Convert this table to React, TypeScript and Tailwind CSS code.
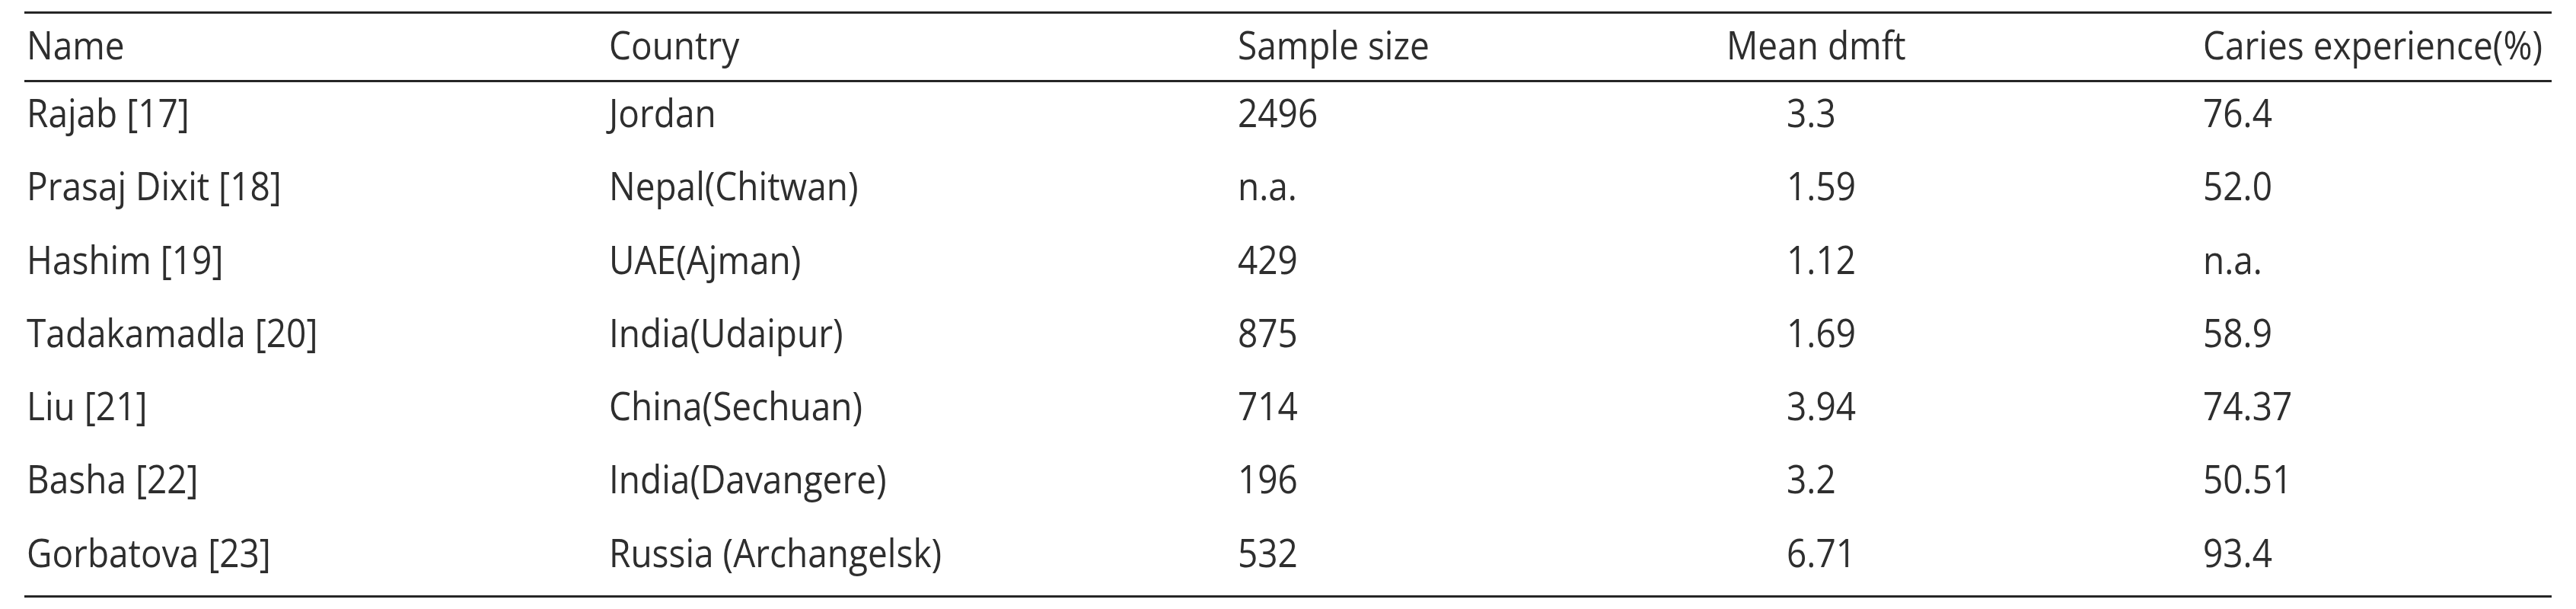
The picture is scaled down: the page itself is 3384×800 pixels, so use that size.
import React from 'react';

interface StudyRow {
    name: string;
    country: string;
    sample: string;
    dmft: string;
    caries: string;
}

const rows: StudyRow[] = [
    { name: 'Rajab [17]', country: 'Jordan', sample: '2496', dmft: '3.3', caries: '76.4' },
    { name: 'Prasaj Dixit [18]', country: 'Nepal(Chitwan)', sample: 'n.a.', dmft: '1.59', caries: '52.0' },
    { name: 'Hashim [19]', country: 'UAE(Ajman)', sample: '429', dmft: '1.12', caries: 'n.a.' },
    { name: 'Tadakamadla [20]', country: 'India(Udaipur)', sample: '875', dmft: '1.69', caries: '58.9' },
    { name: 'Liu [21]', country: 'China(Sechuan)', sample: '714', dmft: '3.94', caries: '74.37' },
    { name: 'Basha [22]', country: 'India(Davangere)', sample: '196', dmft: '3.2', caries: '50.51' },
    { name: 'Gorbatova [23]', country: 'Russia (Archangelsk)', sample: '532', dmft: '6.71', caries: '93.4' },
];

const grid = 'grid grid-cols-[765px_826px_642px_626px_1fr]';

function Cell({ children, className = '' }: { children: React.ReactNode; className?: string }) {
    return (
        <div className={`pl-[3px] whitespace-nowrap ${className}`}>
            <span className="inline-block origin-bottom scale-y-[1.12]">{children}</span>
        </div>
    );
}

export default function App() {
    return (
        <div className="w-[3384px] h-[800px] bg-white overflow-hidden pt-[15px]">
            <div
                className="ml-[32px] w-[3320px] text-[46px] leading-none text-[#2e2e2e]"
                style={{ fontFamily: '"Open Sans", "Noto Sans", sans-serif' }}
            >
                <div className={`${grid} border-t-[3px] border-b-[3px] border-[#262626] h-[93px] pt-[20px]`}>
                    <Cell>Name</Cell>
                    <Cell>Country</Cell>
                    <Cell>Sample size</Cell>
                    <Cell>Mean dmft</Cell>
                    <Cell>Caries experience(%)</Cell>
                </div>

                <div className="border-b-[3px] border-[#262626]">
                    {rows.map((r) => (
                        <div key={r.name} className={`${grid} h-[96.3px] pt-[19px]`}>
                            <Cell>{r.name}</Cell>
                            <Cell>{r.country}</Cell>
                            <Cell>{r.sample}</Cell>
                            <Cell className="pl-[82px]">{r.dmft}</Cell>
                            <Cell>{r.caries}</Cell>
                        </div>
                    ))}
                </div>
            </div>
        </div>
    );
}
